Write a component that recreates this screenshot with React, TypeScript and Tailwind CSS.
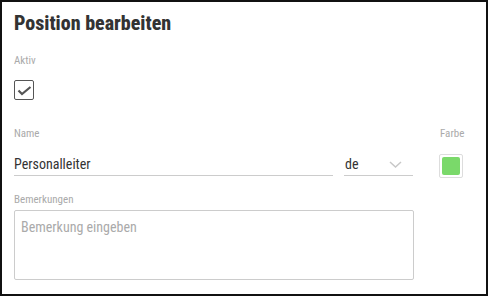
export default function App() {
  return (
    <div className="w-[488px] h-[296px] border-2 border-[#111] bg-white pl-[12px] pt-[9px] font-['Roboto_Condensed',Roboto,sans-serif] [font-stretch:condensed]">
      {/* Titel */}
      <h1 className="text-[20px] leading-[24px] font-extrabold text-[#333]">Position bearbeiten</h1>

      {/* Aktiv */}
      <div className="mt-[20px] text-[11px] leading-[12px] text-[#aaa]">Aktiv</div>
      <div className="mt-[13px] w-[20px] h-[20px] border border-[#555] rounded-[2px] flex items-center justify-center">
        <svg width="18" height="18" viewBox="0 0 18 18" fill="none">
          <polyline points="3.5,9.5 7,13 15.5,6" stroke="#555" strokeWidth="2.2" />
        </svg>
      </div>

      {/* Name / Sprache / Farbe */}
      <div className="mt-[28px] h-[48px] flex items-start">
        <div className="w-[319px]">
          <div className="text-[11px] leading-[12px] text-[#aaa]">Name</div>
          <div className="mt-[12px] h-[24px] border-b border-[#ccc] pt-[2px] text-[14px] leading-[20px] text-[#333]">
            Personalleiter
          </div>
        </div>
        <div className="ml-[11px] w-[69px]">
          <div className="h-[12px]" />
          <div className="mt-[12px] h-[24px] border-b border-[#ccc] pt-[2px] pl-[1px] pr-[11px] flex items-start justify-between text-[14px] leading-[20px] text-[#333]">
            <span>de</span>
            <svg width="13" height="7" viewBox="0 0 13 7" fill="none" className="mt-[7px]">
              <polyline points="1,1 6.5,6 12,1" stroke="#c8c8c8" strokeWidth="1.5" />
            </svg>
          </div>
        </div>
        <div className="ml-[26px]">
          <div className="pl-[1px] text-[11px] leading-[12px] text-[#aaa]">Farbe</div>
          <div className="mt-[14px] w-[24px] h-[24px] border border-[#ddd] rounded-[2px] p-[2px]">
            <div className="w-full h-full rounded-[2px] bg-[#7ad96a]" />
          </div>
        </div>
      </div>

      {/* Bemerkungen */}
      <div className="mt-[18px] text-[11px] leading-[12px] text-[#aaa]">Bemerkungen</div>
      <textarea
        className="mt-[4px] block w-[400px] h-[70px] resize-none border border-[#ccc] rounded-[2px] px-[6px] py-[6px] text-[14px] leading-[20px] text-[#333] placeholder:text-[#aaa] outline-none"
        placeholder="Bemerkung eingeben"
      />
    </div>
  );
}
